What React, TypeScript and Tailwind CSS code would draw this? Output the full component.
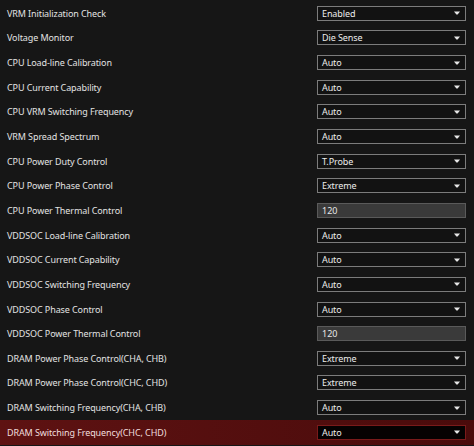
import React from "react";

type Item = {
  label: string;
  value: string;
  kind: "select" | "number";
};

const items: Item[] = [
  { label: "VRM Initialization Check", value: "Enabled", kind: "select" },
  { label: "Voltage Monitor", value: "Die Sense", kind: "select" },
  { label: "CPU Load-line Calibration", value: "Auto", kind: "select" },
  { label: "CPU Current Capability", value: "Auto", kind: "select" },
  { label: "CPU VRM Switching Frequency", value: "Auto", kind: "select" },
  { label: "VRM Spread Spectrum", value: "Auto", kind: "select" },
  { label: "CPU Power Duty Control", value: "T.Probe", kind: "select" },
  { label: "CPU Power Phase Control", value: "Extreme", kind: "select" },
  { label: "CPU Power Thermal Control", value: "120", kind: "number" },
  { label: "VDDSOC Load-line Calibration", value: "Auto", kind: "select" },
  { label: "VDDSOC Current Capability", value: "Auto", kind: "select" },
  { label: "VDDSOC Switching Frequency", value: "Auto", kind: "select" },
  { label: "VDDSOC Phase Control", value: "Auto", kind: "select" },
  { label: "VDDSOC Power Thermal Control", value: "120", kind: "number" },
  { label: "DRAM Power Phase Control(CHA, CHB)", value: "Extreme", kind: "select" },
  { label: "DRAM Power Phase Control(CHC, CHD)", value: "Extreme", kind: "select" },
  { label: "DRAM Switching Frequency(CHA, CHB)", value: "Auto", kind: "select" },
  { label: "DRAM Switching Frequency(CHC, CHD)", value: "Auto", kind: "select" },
];

function Arrow() {
  return (
    <svg width="6" height="4" viewBox="0 0 6 4" className="shrink-0">
      <path d="M0 0.5 H6 L3.6 3.5 H2.4 Z" fill="#e6e6e6" />
    </svg>
  );
}

function Row({ item, active }: { item: Item; active: boolean }) {
  return (
    <div
      className={
        active
          ? "flex h-[24.65px] items-center justify-between bg-gradient-to-r from-[#5e1212] to-[#4a0b0b] pl-[7px] pr-[8px]"
          : "flex h-[24.65px] items-center justify-between pl-[7px] pr-[8px]"
      }
    >
      <span
        className={
          active
            ? "text-[9px] leading-none tracking-[-0.1px] text-[#f0dede]"
            : "text-[9px] leading-none tracking-[-0.1px] text-[#e2e2e2]"
        }
      >
        {item.label}
      </span>

      {item.kind === "number" ? (
        <div className="flex h-[15px] w-[149px] items-center border border-[#5a5a5a] bg-[#3a3a3a] pl-[4px]">
          <span className="text-[9px] leading-none text-[#e8e8e8]">
            {item.value}
          </span>
        </div>
      ) : (
        <div
          className={
            active
              ? "flex h-[15px] w-[149px] items-center justify-between border border-[#7a1a1a] bg-[#060202] pl-[4px] pr-[5px]"
              : "flex h-[15px] w-[149px] items-center justify-between border border-[#7c7c7c] bg-[#121212] pl-[4px] pr-[5px]"
          }
        >
          <span className="text-[9px] leading-none tracking-[-0.1px] text-[#ececec]">
            {item.value}
          </span>
          <Arrow />
        </div>
      )}
    </div>
  );
}

export default function App() {
  return (
    <div
      className="h-[446px] w-[474px] overflow-hidden bg-[#161616] pt-[1px]"
      style={{ fontFamily: '"Noto Sans", "Open Sans", sans-serif' }}
    >
      {items.map((item, i) => (
        <Row key={item.label} item={item} active={i === items.length - 1} />
      ))}
    </div>
  );
}
